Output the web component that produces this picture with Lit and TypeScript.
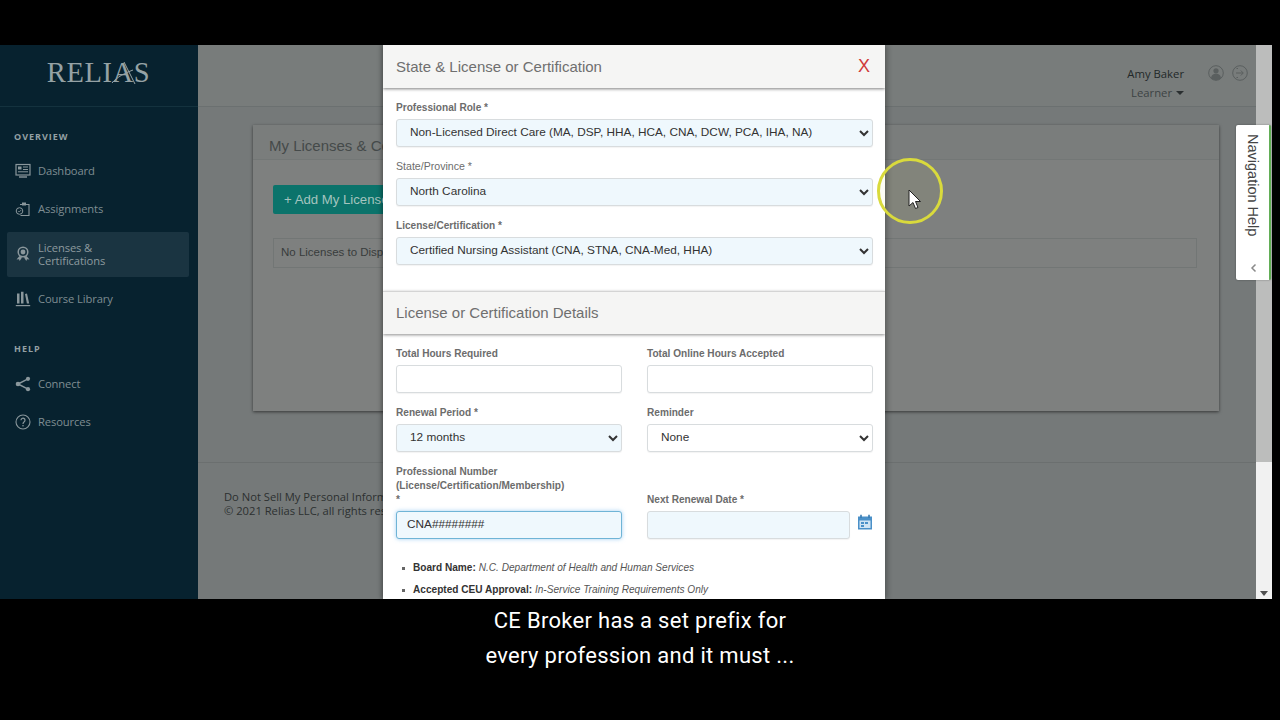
import { LitElement, html, css, svg } from "lit";
import { customElement } from "lit/decorators.js";

const icons: Record<string, unknown> = {
  dash: svg`<rect x="1" y="1.5" width="14" height="10.5" stroke="currentColor" fill="none" stroke-width="1.2"/><rect x="3" y="3.5" width="3.5" height="3" fill="currentColor"/><path d="M8 4h5M8 6.5h5M3 8.8h10" stroke="currentColor"/><path d="M4 14h8" stroke="currentColor" stroke-width="1.4"/>`,
  assign: svg`<path d="M5 3.5h9v11H5.5" stroke="currentColor" fill="none" stroke-width="1.1"/><rect x="7" y="1.5" width="4" height="3" fill="currentColor"/><circle cx="4.5" cy="10" r="3.3" stroke="currentColor" fill="none"/><path d="M3.2 10l1 1 2-2" stroke="currentColor" fill="none" stroke-width=".8"/>`,
  lic: svg`<circle cx="8" cy="6" r="4.8" stroke="currentColor" fill="none" stroke-width="1.5"/><circle cx="8" cy="6" r="2.4" fill="currentColor"/><path d="M4.5 10l-3 3.5 2.5-.2.7 1.7 2.3-3.6M11.5 10l3 3.5-2.5-.2-.7 1.7-2.3-3.6" fill="currentColor"/>`,
  lib: svg`<path d="M2 2.5h2.500v10H2zM6 .8h2.500v11.700H6zM10 3l2-.5 2.200 10h-2.300z" fill="currentColor"/><path d="M.8 14.600h14.400" stroke="currentColor" stroke-width="1.200"/>`,
  share: svg`<path d="M13 2.800L3 8l10 5.200" stroke="currentColor" fill="none" stroke-width="1.500"/><circle cx="13" cy="2.800" r="2.100" fill="currentColor"/><circle cx="3" cy="8" r="2.300" fill="currentColor"/><circle cx="13" cy="13.200" r="2.100" fill="currentColor"/>`,
  help: svg`<circle cx="8" cy="8" r="7" stroke="currentColor" fill="none" stroke-width="1.100"/><path d="M6 6.200a2 2 0 1 1 3.200 1.600C8.400 8.400 8 8.800 8 10" stroke="currentColor" fill="none" stroke-width="1.200"/><circle cx="8" cy="11.800" r=".8" fill="currentColor"/>`,
};

@customElement("app-root")
export class AppRoot extends LitElement {
  static styles = css`
    :host { display: block; width: 1280px; height: 720px; background: #000; overflow: hidden; font-family: "Liberation Sans", Arial, sans-serif; }
    .frame { height: 720px; display: flex; flex-direction: column; padding-top: 45px; box-sizing: border-box; }
    .video { height: 554px; width: 1272px; display: flex; position: relative; overflow: hidden; flex: none; }
    .side { width: 198px; flex: none; background: #07222f; color: #8a979c; font-family: "Open Sans", sans-serif; box-sizing: border-box; }
    .logo { height: 62px; box-sizing: border-box; border-bottom: 1px solid #14323e; display: flex; justify-content: center; align-items: center; padding: 0 1px 5px 0; }
    .logo-text { position: relative; font: 28.5px "Liberation Serif", serif; letter-spacing: .6px; color: #95a2a5; line-height: 1; }
    .logo-text svg { position: absolute; left: 56px; top: -2px; width: 34px; height: 28px; }
    .sec { height: 14px; line-height: 14px; font-size: 9px; font-weight: 700; letter-spacing: 1px; color: #93a0a4; padding-left: 14px; }
    .sec.a { margin: 23px 0 8px; }
    .sec.b { margin: 24px 0 9px; }
    .item { height: 38px; box-sizing: border-box; padding: 0 0 1px 15px; display: flex; align-items: center; gap: 7px; font-size: 11.2px; letter-spacing: -.1px; color: #7f8d92; }
    .item svg { width: 16px; height: 16px; flex: none; color: #8a979c; }
    .item.on { height: 45px; margin: 4px 9px 3px 7px; padding: 0 0 1px 8px; background: #1a3441; border-radius: 2px; line-height: 13px; color: #8d9a9f; }
    .main { flex: 1; background: #757979; min-width: 0; display: flex; flex-direction: column; }
    .top { height: 62px; flex: none; box-sizing: border-box; border-bottom: 1px solid #6b7070; display: flex; justify-content: flex-end; padding: 19px 8px 0 0; gap: 24px; background: #787c7b; font-family: "Open Sans", sans-serif; }
    .user { text-align: right; font-size: 11.3px; line-height: 19px; color: #222829; }
    .user .role { color: #3c4344; }
    .caret { display: inline-block; border: 4px solid transparent; border-top: 4px solid #2a2f30; border-bottom: 0; vertical-align: middle; margin: 0 0 1px 1px; }
    .uicons { display: flex; gap: 8px; height: 16px; margin-top: 1px; }
    .uicons svg { width: 16px; height: 16px; }
    .content { padding: 18px 37px 0 55px; }
    .card { height: 286px; background: #7e807f; box-shadow: 0 1px 3px rgba(0,0,0,.55); }
    .card-h { height: 35px; box-sizing: border-box; border-bottom: 1px solid #737776; background: #7a7d7c; padding-left: 16px; font-size: 15px; line-height: 42px; color: #454a4a; white-space: nowrap; overflow: hidden; }
    .add { margin: 25px 0 0 20px; width: 150px; height: 29px; background: #0b736b; border-radius: 2px; color: #a4c4bf; line-height: 29px; padding-left: 11px; box-sizing: border-box; white-space: nowrap; font-size: 13.2px; }
    .none { margin: 24px 22px 0 20px; height: 30px; border: 1px solid #727675; box-sizing: border-box; font-size: 11.5px; line-height: 26px; padding-left: 7px; color: #383c3c; }
    .foot { margin-top: 51px; border-top: 1px solid #6b6f6f; padding: 27px 0 0 26px; font: 11.2px/14px "Open Sans", sans-serif; color: #2c3030; }
    .bar { width: 16px; flex: none; background: #f1f1f1; position: relative; }
    .thumb { height: 417px; background: #bcbdbc; }
    .arrow { position: absolute; bottom: 3px; left: 4px; border: 4px solid transparent; border-top: 5px solid #505050; border-bottom: 0; }

    .modal { position: absolute; left: 383px; top: 0; width: 502px; height: 554px; background: #fff; overflow: hidden; box-shadow: -2px 0 4px rgba(0,0,0,.3), 3px 0 5px rgba(0,0,0,.22); }
    .mh { height: 43px; box-sizing: border-box; background: #f5f5f4; box-shadow: 0 1px 3px rgba(0,0,0,.5); padding: 0 15px 0 13px; display: flex; justify-content: space-between; align-items: center; font-size: 15px; color: #6f6f6f; position: relative; }
    .x { color: #d03a3a; font-size: 18px; }
    .pane { padding: 12px 12px 0 13px; display: grid; gap: 12px; }
    .f { display: flex; flex-direction: column; gap: 4px; justify-content: flex-end; min-width: 0; }
    label { font-size: 10.1px; line-height: 14px; padding-top: 1px; font-weight: 700; color: #6c6c6c; }
    label.reg { font-weight: 400; font-size: 10.6px; padding-top: 0; padding-bottom: 1px; }
    select, input { box-sizing: border-box; height: 28px; width: 100%; border: 1px solid #d8dcde; border-radius: 3px; background: #fff; font: 11.8px "Liberation Sans", Arial, sans-serif; color: #333; padding: 0 0 2px 9px; margin: 0; outline: none; box-shadow: 0 1px 1px rgba(0,0,0,.05); }
    .blue { background: #eff8fd; }
    .focus { border-color: #6fb4d6; box-shadow: 0 0 4px rgba(102,175,233,.6); padding-left: 10px; }
    .sh { height: 43px; margin-top: 26px; box-sizing: border-box; border-top: 1px solid #d4d4d4; background: #f5f5f4; box-shadow: 0 1px 3px rgba(0,0,0,.45); padding-left: 13px; font-size: 15px; line-height: 42px; color: #6f6f6f; position: relative; }
    .two { grid-template-columns: 226px 226px; column-gap: 25px; padding-top: 12px; }
    .date { display: flex; align-items: flex-start; gap: 8px; }
    .date input { flex: 1; min-width: 0; }
    .date svg { width: 14px; height: 16px; margin-top: 3px; flex: none; margin-right: 1px; }
    ul { margin: 22px 0 0; padding: 0 0 0 30px; list-style: none; font-size: 10.1px; color: #333; }
    li { height: 22px; line-height: 14px; position: relative; color: #555; white-space: nowrap; }
    li::before { content: ""; position: absolute; left: -11px; top: 6px; width: 2.5px; height: 2.5px; background: #666; }
    li b { color: #333; }

    .nav { position: absolute; left: 1236px; top: 80px; width: 35px; height: 155px; box-sizing: border-box; background: #fff; border-right: 2px solid #62ae56; border-radius: 2px; box-shadow: 0 0 2px rgba(0,0,0,.4); display: flex; flex-direction: column; align-items: center; justify-content: space-between; padding: 9px 0 4px; }
    .nav span { writing-mode: vertical-rl; font: 14.500px "Liberation Sans", sans-serif; color: #444; margin-left: 1px; }
    .nav svg { width: 10px; height: 10px; margin: 0 0 3px 3px; }
    .ring { position: absolute; left: 877px; top: 113px; width: 66px; height: 66px; box-sizing: border-box; border: 3px solid #d9da3c; border-radius: 50%; background: rgba(217,218,60,.05); }
    .cursor { position: absolute; left: 908px; top: 144px; width: 13px; height: 21px; }

    .cap { flex: 1; text-align: center; color: #fff; font: 22px/35px Roboto, sans-serif; letter-spacing: .3px; padding-top: 4px; }
  `;

  render() {
    const item = (i: string, t: unknown, on = false) => html`<div class="item ${on ? "on" : ""}"><svg viewBox="0 0 16 16">${icons[i]}</svg><span>${t}</span></div>`;
    return html`<div class="frame">
      <div class="video">
        <aside class="side">
          <div class="logo"><div class="logo-text">RELIAS<svg viewBox="0 0 34 28"><path d="M9 26C14 20 22 16 30 13M21 5L32 27" stroke="#95a2a5" stroke-width="1" fill="none"/></svg></div></div>
          <div class="sec a">OVERVIEW</div>
          ${item("dash", "Dashboard")}
          ${item("assign", "Assignments")}
          ${item("lic", html`Licenses &<br />Certifications`, true)}
          ${item("lib", "Course Library")}
          <div class="sec b">HELP</div>
          ${item("share", "Connect")}
          ${item("help", "Resources")}
        </aside>
        <div class="main">
          <div class="top">
            <div class="user"><div>Amy Baker</div><div class="role">Learner <i class="caret"></i></div></div>
            <div class="uicons">
              <svg viewBox="0 0 16 16"><circle cx="8" cy="8" r="7.300" fill="none" stroke="#5a5f5f"/><circle cx="8" cy="5.800" r="2.600" fill="#5a5f5f"/><path d="M3 13.200c.5-3.500 2.500-4.500 5-4.500s4.500 1 5 4.500A7 7 0 0 1 3 13.200z" fill="#5a5f5f"/></svg>
              <svg viewBox="0 0 16 16"><circle cx="8" cy="8" r="7.300" fill="none" stroke="#5a5f5f"/><path d="M4 8h7M8.800 5.500 11.300 8l-2.500 2.500M6 3.500H4.500M6 12.500H4.500" stroke="#5a5f5f" fill="none"/></svg>
            </div>
          </div>
          <div class="content">
            <div class="card">
              <div class="card-h">My Licenses &amp; Certifications</div>
              <div class="add">+ Add My License</div>
              <div class="none">No Licenses to Display</div>
            </div>
          </div>
          <div class="foot">Do Not Sell My Personal Information<br />© 2021 Relias LLC, all rights reserved.</div>
        </div>
        <div class="bar"><div class="thumb"></div><div class="arrow"></div></div>

        <div class="modal">
          <div class="mh"><span>State &amp; License or Certification</span><span class="x">X</span></div>
          <div class="pane">
            <div class="f"><label>Professional Role *</label><select class="blue"><option>Non-Licensed Direct Care (MA, DSP, HHA, HCA, CNA, DCW, PCA, IHA, NA)</option></select></div>
            <div class="f"><label class="reg">State/Province *</label><select class="blue"><option>North Carolina</option></select></div>
            <div class="f"><label>License/Certification *</label><select class="blue"><option>Certified Nursing Assistant (CNA, STNA, CNA-Med, HHA)</option></select></div>
          </div>
          <div class="sh">License or Certification Details</div>
          <div class="pane two">
            <div class="f"><label>Total Hours Required</label><input /></div>
            <div class="f"><label>Total Online Hours Accepted</label><input /></div>
            <div class="f"><label>Renewal Period *</label><select class="blue"><option>12 months</option></select></div>
            <div class="f"><label>Reminder</label><select><option>None</option></select></div>
            <div class="f"><label>Professional Number<br />(License/Certification/Membership)<br />*</label><input class="blue focus" .value=${"CNA########"} /></div>
            <div class="f"><label>Next Renewal Date *</label><div class="date"><input class="blue" /><svg viewBox="0 0 14 16"><path d="M0 2.500h14V15.500H0z" fill="#4a90c8"/><path d="M3 .8v3M11 .8v3" stroke="#2f74ad" stroke-width="1.500"/><rect x="1.500" y="6.500" width="11" height="7.500" fill="#cfe3f3"/><path d="M3 8h3v2H3zM7 8h3v2H7zM3 11h3v2H3z" fill="#4a90c8"/></svg></div></div>
          </div>
          <ul>
            <li><b>Board Name:</b> <i>N.C. Department of Health and Human Services</i></li>
            <li><b>Accepted CEU Approval:</b> <i>In-Service Training Requirements Only</i></li>
          </ul>
        </div>

        <div class="nav"><span>Navigation Help</span><svg viewBox="0 0 10 10"><path d="M6.500 1.500 3 5l3.500 3.500" fill="none" stroke="#8a8a8a" stroke-width="1.500"/></svg></div>
        <div class="ring"></div>
        <svg class="cursor" viewBox="0 0 13 21"><path d="M1 1v16l4-3.500 2.500 6 2.500-1-2.500-6H12.500z" fill="#fff" stroke="#222" stroke-width="1"/></svg>
      </div>
      <div class="cap">CE Broker has a set prefix for<br />every profession and it must ...</div>
    </div>`;
  }
}
